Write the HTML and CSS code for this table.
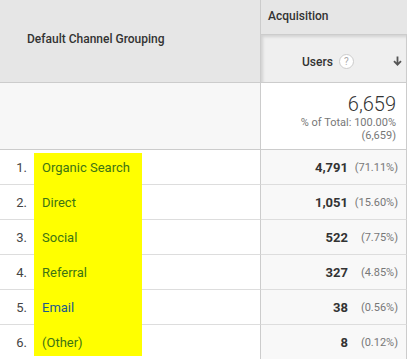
FILE: index.html
```html
<!DOCTYPE html>
<html>
<head>
<meta charset="utf-8">
<link rel="stylesheet" href="styles.css">
</head>
<body>
<div class="report">
  <div class="head">
    <div class="head-dim">Default Channel Grouping</div>
    <div class="head-metrics">
      <div class="group">Acquisition</div>
      <div class="metric">
        <span class="metric-label">Users</span>
        <span class="help">?</span>
        <svg class="sort" width="9" height="10" viewBox="0 0 9 10"><path d="M4.5 0.5V8.5M1 5.2L4.5 8.7L8 5.2" fill="none" stroke="#555" stroke-width="1.8"/></svg>
      </div>
    </div>
  </div>
  <div class="total">
    <div class="total-dim"></div>
    <div class="total-val">
      <div class="big">6,659</div>
      <div class="small">% of Total: 100.00%</div>
      <div class="small">(6,659)</div>
    </div>
  </div>
  <div class="row first">
    <div class="num">1.</div><div class="name">Organic Search</div><div class="spacer"></div>
    <div class="val"><span class="v">4,791</span><span class="p">(71.11%)</span></div>
  </div>
  <div class="row">
    <div class="num">2.</div><div class="name">Direct</div><div class="spacer"></div>
    <div class="val"><span class="v">1,051</span><span class="p">(15.60%)</span></div>
  </div>
  <div class="row">
    <div class="num">3.</div><div class="name">Social</div><div class="spacer"></div>
    <div class="val"><span class="v">522</span><span class="p">(7.75%)</span></div>
  </div>
  <div class="row">
    <div class="num">4.</div><div class="name">Referral</div><div class="spacer"></div>
    <div class="val"><span class="v">327</span><span class="p">(4.85%)</span></div>
  </div>
  <div class="row">
    <div class="num">5.</div><div class="name blue">Email</div><div class="spacer"></div>
    <div class="val"><span class="v">38</span><span class="p">(0.56%)</span></div>
  </div>
  <div class="row last">
    <div class="num">6.</div><div class="name">(Other)</div><div class="spacer"></div>
    <div class="val"><span class="v">8</span><span class="p">(0.12%)</span></div>
  </div>
</div>
</body>
</html>
```
FILE: styles.css
```css
html, body {
  margin: 0;
  padding: 0;
  background: #fff;
}
body {
  font-family: Roboto, "Liberation Sans", Arial, sans-serif;
  color: #333;
}
.report {
  width: 407px;
}
.head {
  display: flex;
  height: 82px;
  border-bottom: 1px solid #ccc;
  background: #e6e6e6;
}
.head-dim {
  box-sizing: border-box;
  border-right: 1px solid #ccc;
  width: 261px;
  padding: 0 0 4px 27px;
  display: flex;
  align-items: center;
  font-size: 12px;
  font-weight: 500;
  color: #333;
}
.head-metrics {
  width: 146px;
  display: flex;
  flex-direction: column;
}
.group {
  height: 35px;
  box-sizing: border-box;
  border-bottom: 1px solid #ccc;
  padding: 0 0 3px 7px;
  display: flex;
  align-items: center;
  font-size: 12px;
  font-weight: 500;
}
.metric {
  flex: 1;
  box-sizing: border-box;
  border-right: 1px solid #ccc;
  background: #efefef;
  box-shadow: inset 2px 2px 3px rgba(0,0,0,0.12);
  display: flex;
  align-items: center;
  padding: 6px 0 0 41px;
  position: relative;
  font-size: 12px;
  font-weight: 500;
}
.help {
  margin-left: 6px;
  width: 13px;
  height: 13px;
  border: 1px solid #ccc;
  border-radius: 50%;
  background: #fff;
  color: #aaa;
  font-size: 10px;
  font-weight: 400;
  line-height: 13px;
  text-align: center;
}
.sort {
  position: absolute;
  right: 4px;
  top: 21px;
}
.total {
  display: flex;
  height: 66px;
  border-bottom: 1px solid #ccc;
}
.total-dim {
  width: 261px;
  box-sizing: border-box;
  border-right: 1px solid #ccc;
  background: #f7f7f7;
}
.total-val {
  width: 146px;
  box-sizing: border-box;
  border-right: 1px solid #ccc;
  background: #fff;
  display: flex;
  flex-direction: column;
  align-items: flex-end;
  padding: 9px 10px 0 0;
}
.big {
  font-size: 20px;
  font-weight: 300;
  line-height: 24px;
  color: #333;
}
.small {
  font-size: 11px;
  line-height: 13px;
  color: #777;
}
.row {
  display: flex;
  height: 35px;
}
.row > div {
  box-sizing: border-box;
  border-bottom: 1px solid #ddd;
  display: flex;
  align-items: center;
  font-size: 13px;
}
.num {
  width: 34px;
  justify-content: flex-end;
  padding-right: 7px;
  color: #444;
}
.row > .name {
  width: 108px;
  background: #ffff00;
  border-bottom-color: #ffff00;
  padding-left: 8px;
  color: #3d7414;
}
.row > .name.blue {
  color: #205a8c;
}
.row.first > .name {
  box-shadow: inset 0 3px 0 #fff;
}
.row.last > .name {
  box-shadow: inset 0 -3px 0 #fff;
  border-bottom-color: #fff;
}
.spacer {
  width: 119px;
  border-right: 1px solid #ccc;
}
.row > .val {
  width: 146px;
  border-right: 1px solid #ccc;
  background: #f8f8f8;
  justify-content: flex-end;
  padding-right: 8px;
}
.v {
  font-weight: 700;
  color: #333;
}
.p {
  width: 50px;
  text-align: right;
  font-size: 11px;
  color: #777;
}
```
